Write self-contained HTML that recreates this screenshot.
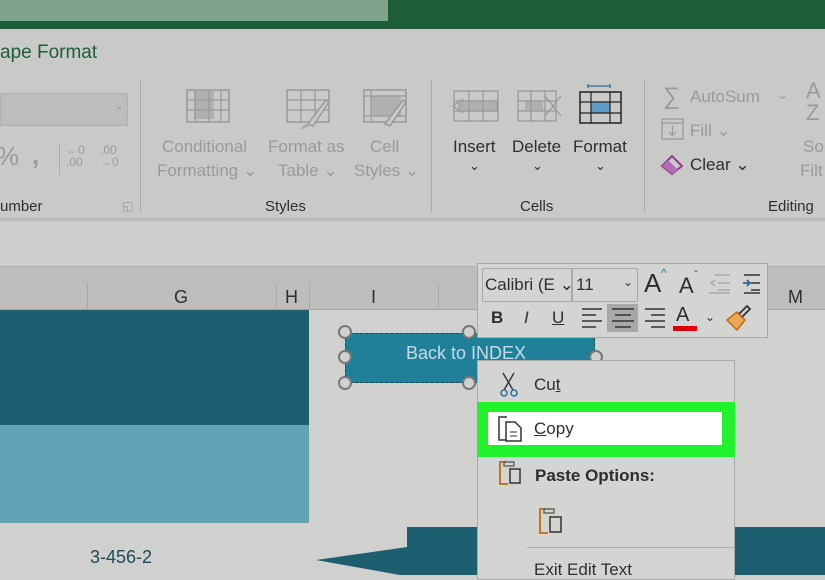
<!DOCTYPE html>
<html><head><meta charset="utf-8"><style>
*{margin:0;padding:0;box-sizing:border-box}
body{width:825px;height:575px;overflow:hidden;position:relative;background:#d0d0ce;font-family:"Liberation Sans",sans-serif}
.a{position:absolute}
.t{position:absolute;white-space:nowrap;font-size:17px}
.g{color:#9a9a9a}
.k{color:#2e2e2e}
</style></head><body>
<div class="a" style="left:0;top:0;width:825px;height:29px;background:#1e5c3a"></div>
<div class="a" style="left:0;top:0;width:388px;height:21px;background:#7fa48e"></div>
<div class="a" style="left:0;top:29px;width:825px;height:190px;background:#c9c9c7"></div>
<div class="a" style="left:0;top:218px;width:825px;height:5px;background:linear-gradient(#b5b5b3,#cdcdcb)"></div>
<div class="t" style="left:0;top:42px;font-size:19px;color:#1e5c3a">ape Format</div>
<div class="a" style="left:0;top:93px;width:128px;height:33px;background:#bdbdbb;border:1px solid #b0b0ae"></div>
<div class="t g" style="left:114px;top:98px;font-size:12px">⌄</div>
<div class="t g" style="left:-4px;top:141px;font-size:26px">%</div>
<div class="t g" style="left:32px;top:140px;font-size:26px;font-weight:bold">,</div>
<div class="a" style="left:59px;top:143px;width:1px;height:32px;background:#aaa"></div>
<div class="t g" style="left:66px;top:144px;font-size:12px;line-height:12px">←0<br>.00</div>
<div class="t g" style="left:100px;top:144px;font-size:12px;line-height:12px">.00<br>→0</div>
<div class="t k" style="left:0;top:198px;font-size:15px">umber</div>
<div class="t g" style="left:122px;top:199px;font-size:12px">◱</div>
<div class="a" style="left:140px;top:80px;width:1px;height:132px;background:#aaa"></div>
<div class="a" style="left:431px;top:80px;width:1px;height:132px;background:#aaa"></div>
<div class="a" style="left:644px;top:80px;width:1px;height:132px;background:#aaa"></div>
<!-- style icons -->
<svg class="a" style="left:186px;top:88px" width="46" height="36"><rect x="1" y="2" width="42" height="32" fill="none" stroke="#999" stroke-width="1.5"/><rect x="8" y="3" width="20" height="28" fill="#b0b0ae"/><path d="M1 12h42M1 22h42M9 2v32M23 2v32M35 2v32" stroke="#999" stroke-width="1.2"/></svg>
<svg class="a" style="left:286px;top:88px" width="48" height="44"><rect x="1" y="2" width="42" height="32" fill="none" stroke="#999" stroke-width="1.5"/><path d="M1 12h42M1 22h42M15 2v32M29 2v32" stroke="#999" stroke-width="1.2"/><path d="M22 36l18-24 3 2-16 24z" fill="#c9c9c7" stroke="#999" stroke-width="1.5"/><path d="M14 42c4-6 8-8 12-5" fill="#aaa"/></svg>
<svg class="a" style="left:363px;top:88px" width="48" height="44"><rect x="1" y="2" width="42" height="32" fill="none" stroke="#999" stroke-width="1.5"/><rect x="8" y="8" width="30" height="20" fill="#b0b0ae"/><path d="M1 8h42M1 28h42M8 2v32" stroke="#999" stroke-width="1.2"/><path d="M22 36l18-24 3 2-16 24z" fill="#c9c9c7" stroke="#999" stroke-width="1.5"/></svg>
<div class="t g" style="left:162px;top:137px">Conditional</div>
<div class="t g" style="left:157px;top:161px">Formatting ⌄</div>
<div class="t g" style="left:268px;top:137px">Format as</div>
<div class="t g" style="left:278px;top:161px">Table ⌄</div>
<div class="t g" style="left:370px;top:137px">Cell</div>
<div class="t g" style="left:354px;top:161px">Styles ⌄</div>
<div class="t k" style="left:265px;top:198px;font-size:15px">Styles</div>
<!-- cells icons -->
<svg class="a" style="left:451px;top:88px" width="50" height="36"><rect x="3" y="3" width="44" height="30" fill="none" stroke="#999" stroke-width="1.3"/><rect x="8" y="13" width="38" height="10" fill="#b0b0ae" stroke="#999"/><path d="M3 13h44M3 23h44M18 3v30M32 3v30M12 11l-10 7 10 7" stroke="#999" stroke-width="1.2" fill="none"/></svg>
<svg class="a" style="left:515px;top:88px" width="48" height="36"><rect x="3" y="3" width="38" height="30" fill="none" stroke="#999" stroke-width="1.3"/><rect x="10" y="13" width="18" height="10" fill="#b0b0ae"/><path d="M3 13h38M3 23h38M16 3v30M30 3v30M30 8l16 20M46 8L30 28" stroke="#999" stroke-width="1.3" fill="none"/></svg>
<svg class="a" style="left:578px;top:82px" width="46" height="44"><path d="M10 4h22M10 2v4M32 2v4" stroke="#2b6ea0" stroke-width="1.3"/><rect x="2" y="10" width="41" height="31" fill="none" stroke="#222" stroke-width="1.5"/><rect x="13" y="20" width="19" height="11" fill="#5f9bc7" stroke="#2b6ea0"/><path d="M2 20h41M2 31h41M13 10v31M32 10v31" stroke="#222" stroke-width="1.2"/></svg>
<div class="t k" style="left:453px;top:137px">Insert</div>
<div class="t k" style="left:512px;top:137px">Delete</div>
<div class="t k" style="left:573px;top:137px">Format</div>
<div class="t k" style="left:469px;top:158px;font-size:13px">⌄</div>
<div class="t k" style="left:532px;top:158px;font-size:13px">⌄</div>
<div class="t k" style="left:595px;top:158px;font-size:13px">⌄</div>
<div class="t k" style="left:520px;top:198px;font-size:15px">Cells</div>
<!-- editing -->
<div class="t g" style="left:663px;top:83px;font-size:24px">∑</div>
<div class="t g" style="left:690px;top:87px">AutoSum</div>
<div class="t g" style="left:777px;top:87px;font-size:13px">⌄</div>
<div class="t g" style="left:806px;top:80px;font-size:22px;line-height:22px">A<br>Z</div>
<svg class="a" style="left:661px;top:118px" width="24" height="22"><rect x="1" y="1" width="21" height="20" fill="none" stroke="#999" stroke-width="1.3"/><path d="M1 5h21M11.5 8v9M8 14l3.5 3.5 3.5-3.5" stroke="#999" stroke-width="1.2" fill="none"/></svg>
<div class="t g" style="left:690px;top:121px">Fill ⌄</div>
<svg class="a" style="left:660px;top:152px" width="26" height="24"><path d="M2 14L12 4l10 10-10 8z" fill="#c9c9c7" stroke="#8e3e8e" stroke-width="2"/><path d="M2 14l6-6 10 10-6 4z" fill="#b66ab6"/></svg>
<div class="t k" style="left:690px;top:155px">Clear ⌄</div>
<div class="t g" style="left:803px;top:137px">Sor</div>
<div class="t g" style="left:800px;top:161px">Filt</div>
<div class="t k" style="left:768px;top:198px;font-size:15px">Editing</div>
<!-- sheet -->
<div class="a" style="left:0;top:223px;width:825px;height:44px;background:#cfcfcd"></div>
<div class="a" style="left:0;top:266px;width:825px;height:44px;background:#bdbdbb;border-top:1px solid #b0b0ae;border-bottom:1px solid #a5a5a3"></div>
<div class="a" style="left:87px;top:283px;width:1px;height:27px;background:#a8a8a6"></div>
<div class="a" style="left:276px;top:283px;width:1px;height:27px;background:#a8a8a6"></div>
<div class="a" style="left:309px;top:283px;width:1px;height:27px;background:#a8a8a6"></div>
<div class="a" style="left:438px;top:283px;width:1px;height:27px;background:#a8a8a6"></div>
<div class="t k" style="left:174px;top:287px;font-size:18px">G</div>
<div class="t k" style="left:285px;top:287px;font-size:18px">H</div>
<div class="t k" style="left:371px;top:287px;font-size:18px">I</div>
<div class="t k" style="left:788px;top:287px;font-size:18px">M</div>
<div class="a" style="left:0;top:310px;width:309px;height:115px;background:#1d5f70"></div>
<div class="a" style="left:0;top:425px;width:309px;height:98px;background:#62a2b5"></div>
<div class="t" style="left:90px;top:547px;font-size:18px;color:#1d4a5a">3-456-2</div>
<svg class="a" style="left:310px;top:525px" width="515" height="50"><path d="M6 35L97 22V2h418v48H90z" fill="#1d5f70"/></svg>
<!-- button -->
<div class="a" style="left:345px;top:333px;width:250px;height:50px;background:#20809a;border:1px dashed #1a4d5a"></div>
<div class="t" style="left:406px;top:343px;font-size:18px;color:#c7dde5">Back to INDEX</div>
<div class="a" style="left:338px;top:325px;width:14px;height:14px;border-radius:50%;border:2.5px solid #777;background:#d0d0ce"></div>
<div class="a" style="left:338px;top:350px;width:14px;height:14px;border-radius:50%;border:2.5px solid #777;background:#d0d0ce"></div>
<div class="a" style="left:338px;top:376px;width:14px;height:14px;border-radius:50%;border:2.5px solid #777;background:#d0d0ce"></div>
<div class="a" style="left:462px;top:376px;width:14px;height:14px;border-radius:50%;border:2.5px solid #777;background:#d0d0ce"></div>
<div class="a" style="left:462px;top:325px;width:14px;height:14px;border-radius:50%;border:2.5px solid #777;background:#d0d0ce"></div>
<div class="a" style="left:589px;top:350px;width:14px;height:14px;border-radius:50%;border:2.5px solid #777;background:#d0d0ce"></div>
<!-- mini toolbar -->
<div class="a" style="left:477px;top:263px;width:291px;height:75px;background:#d4d4d2;border:1px solid #a9a9a7"></div>
<div class="a" style="left:482px;top:268px;width:90px;height:34px;border:1px solid #aaa"></div>
<div class="t k" style="left:485px;top:275px">Calibri (E ⌄</div>
<div class="a" style="left:572px;top:268px;width:66px;height:34px;border:1px solid #aaa"></div>
<div class="t k" style="left:576px;top:275px">11</div>
<div class="t k" style="left:623px;top:275px;font-size:12px">⌄</div>
<div class="t k" style="left:644px;top:268px;font-size:26px">A</div>
<div class="t" style="left:661px;top:266px;font-size:12px;color:#2b6ea0">^</div>
<div class="t k" style="left:679px;top:273px;font-size:22px">A</div>
<div class="t" style="left:694px;top:268px;font-size:12px;color:#2b6ea0">ˇ</div>
<svg class="a" style="left:706px;top:272px" width="60" height="24"><path d="M8 3h16M12 11h12M12 18h12M3 21h21M9 8l-4 3 4 3" stroke="#aaa" stroke-width="1.6" fill="none"/><path d="M38 3h16M45 11h9M45 18h9M38 21h16M37 11h7M41 8l3 3-3 3" stroke="#333" stroke-width="1.6" fill="none"/><path d="M37 11h7M41 8l3 3-3 3" stroke="#2b6ea0" stroke-width="1.6" fill="none"/></svg>
<div class="t k" style="left:491px;top:308px;font-weight:bold">B</div>
<div class="t k" style="left:524px;top:308px;font-style:italic">I</div>
<div class="t k" style="left:552px;top:308px;text-decoration:underline">U</div>
<div class="a" style="left:607px;top:304px;width:31px;height:28px;background:#a8a8a6"></div>
<svg class="a" style="left:579px;top:306px" width="90" height="24"><path d="M3 3h20M3 9h14M3 15h20M3 21h14M33 3h22M36 9h16M33 15h22M36 21h16M66 3h20M72 9h14M66 15h20M72 21h14" stroke="#333" stroke-width="1.6"/></svg>
<div class="t k" style="left:676px;top:304px;font-size:20px">A</div>
<div class="a" style="left:673px;top:326px;width:24px;height:5px;background:#d00"></div>
<div class="t k" style="left:705px;top:310px;font-size:12px">⌄</div>
<svg class="a" style="left:723px;top:304px" width="30" height="28"><path d="M4 16l10-8 8 8-8 10z" fill="#e8a858" stroke="#c06a10" stroke-width="1.5"/><path d="M16 10l8-8 3 3-8 8" fill="none" stroke="#333" stroke-width="1.8"/></svg>
<!-- context menu -->
<div class="a" style="left:477px;top:360px;width:258px;height:220px;background:#d4d4d2;border:1px solid #aaa"></div>
<svg class="a" style="left:499px;top:372px" width="20" height="26"><path d="M4 1l10 17M15 1L5 18" stroke="#333" stroke-width="1.4"/><circle cx="5" cy="21" r="3" fill="none" stroke="#2b6ea0" stroke-width="1.5"/><circle cx="15" cy="21" r="3" fill="none" stroke="#2b6ea0" stroke-width="1.5"/></svg>
<div class="t k" style="left:534px;top:375px">Cu<u>t</u></div>
<div class="a" style="left:477px;top:402px;width:258px;height:55px;background:#22f22e"></div>
<div class="a" style="left:488px;top:412px;width:234px;height:33px;background:#fff"></div>
<svg class="a" style="left:496px;top:416px" width="28" height="26"><path d="M11 1H3v23h8" fill="none" stroke="#333" stroke-width="1.5"/><path d="M10 6h9l6 6v13H10z" fill="#fff" stroke="#333" stroke-width="1.5"/><path d="M14 16h7M14 20h7" stroke="#333"/></svg>
<div class="t k" style="left:534px;top:419px"><u>C</u>opy</div>
<svg class="a" style="left:498px;top:458px" width="26" height="28"><path d="M8 4h-6v22h8" fill="none" stroke="#c06a10" stroke-width="1.8"/><path d="M6 4h10v4H6z" fill="none" stroke="#555" stroke-width="1.3"/><rect x="12" y="11" width="10" height="14" fill="none" stroke="#333" stroke-width="1.5"/></svg>
<div class="t k" style="left:535px;top:466px;font-weight:bold">Paste Options:</div>
<svg class="a" style="left:538px;top:505px" width="26" height="30"><path d="M8 4h-6v24h8" fill="none" stroke="#c06a10" stroke-width="1.8"/><path d="M6 4h10v4H6z" fill="none" stroke="#555" stroke-width="1.3"/><rect x="12" y="12" width="11" height="15" fill="none" stroke="#333" stroke-width="1.5"/></svg>
<div class="a" style="left:527px;top:547px;width:208px;height:1px;background:#aaa"></div>
<div class="t k" style="left:534px;top:560px">Exit Edit Text</div>
</body></html>
